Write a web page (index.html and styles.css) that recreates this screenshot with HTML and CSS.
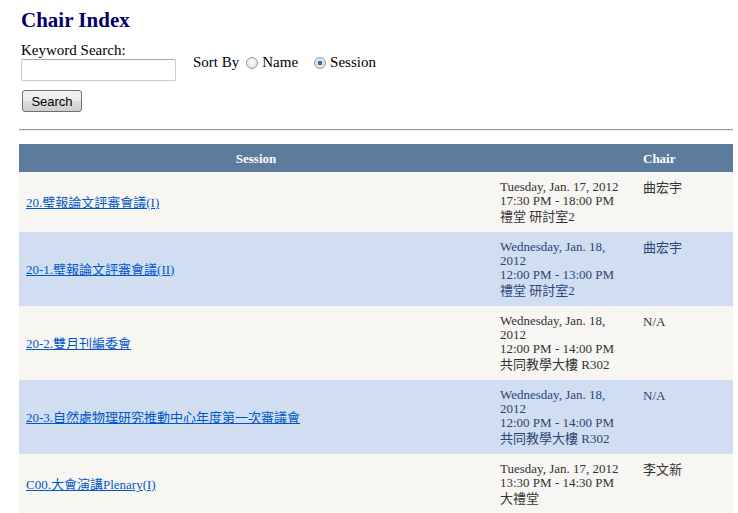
FILE: index.html
```html
<!DOCTYPE html>
<html lang="zh-Hant">
<head>
    <meta charset="UTF-8">
    <meta name="viewport" content="width=device-width, initial-scale=1.0">
    <link rel="stylesheet" href="styles.css">
    <title>Chair Index</title>
</head>
<body>
    <section id="page">

        <h1 class="title">Chair Index</h1>

        <form class="search" action="#" method="GET">
            <div class="keyword">
                <label for="keyword">Keyword Search:</label>
                <input class="inputs" type="text" id="keyword" name="keyword">
                <button type="submit" class="submits">Search</button>
            </div>
            <div class="sort">
                <span>Sort By</span>
                <input class="radios" type="radio" id="byName" name="sort" value="name">
                <label for="byName">Name</label>
                <input class="radios" type="radio" id="bySession" name="sort" value="session" checked>
                <label for="bySession">Session</label>
            </div>
        </form>

        <hr class="rule">

        <table class="grid">
            <colgroup>
                <col class="col-session">
                <col class="col-time">
                <col class="col-chair">
            </colgroup>
            <thead>
                <tr>
                    <th>Session</th>
                    <th></th>
                    <th class="left">Chair</th>
                </tr>
            </thead>
            <tbody>
                <tr class="row">
                    <td class="name"><a href="#">20.璧報論文評審會議(I)</a></td>
                    <td>Tuesday, Jan. 17, 2012<br>17:30 PM - 18:00 PM<span class="place">禮堂 研討室2</span></td>
                    <td class="chair">曲宏宇</td>
                </tr>
                <tr class="alt">
                    <td class="name"><a href="#">20-1.璧報論文評審會議(II)</a></td>
                    <td>Wednesday, Jan. 18, 2012<br>12:00 PM - 13:00 PM<span class="place">禮堂 研討室2</span></td>
                    <td class="chair">曲宏宇</td>
                </tr>
                <tr class="row">
                    <td class="name"><a href="#">20-2.雙月刊編委會</a></td>
                    <td>Wednesday, Jan. 18, 2012<br>12:00 PM - 14:00 PM<span class="place">共同教學大樓 R302</span></td>
                    <td class="chair">N/A</td>
                </tr>
                <tr class="alt">
                    <td class="name"><a href="#">20-3.自然處物理研究推動中心年度第一次審議會</a></td>
                    <td>Wednesday, Jan. 18, 2012<br>12:00 PM - 14:00 PM<span class="place">共同教學大樓 R302</span></td>
                    <td class="chair">N/A</td>
                </tr>
                <tr class="row">
                    <td class="name"><a href="#">C00.大會演講Plenary(I)</a></td>
                    <td>Tuesday, Jan. 17, 2012<br>13:30 PM - 14:30 PM<span class="place">大禮堂</span></td>
                    <td class="chair">李文新</td>
                </tr>
            </tbody>
        </table>

    </section>
</body>
</html>
```

FILE: styles.css
```css
* {
    box-sizing: border-box;
}

html, body {
    margin: 0;
    padding: 0;

    background-color: #FFFFFF;

    font-family: "Liberation Serif", "Noto Sans CJK TC", serif;
    color: #000000;
}

#page {
    padding: 8px 0 0 19px;
    width: 733px;
}

.title {
    margin: 0 0 10px 2px;

    font-size: 21px;
    font-weight: bold;
    line-height: 24px;
    color: #000066;
}

/*

    SEARCH FORM

*/

.search {
    display: flex;
    align-items: flex-start;
    gap: 17px;

    padding-left: 2px;

    font-size: 15px;
}

.keyword {
    display: flex;
    flex-direction: column;
    align-items: flex-start;
}

.keyword label {
    line-height: 17px;
}

.inputs {
    width: 155px;
    height: 22px;

    margin: 0 0 9px 0;
    padding: 1px 3px;

    border: 1px solid #C8CCD3;
    border-top-color: #A5A9B0;
    border-radius: 2px;

    font-size: 13px;
}

.submits {
    width: 60px;
    height: 22px;

    margin-left: 1px;
    padding: 0;

    border: 1px solid #707070;
    border-radius: 3px;

    background: linear-gradient(#F2F2F2 0%, #EBEBEB 50%, #DDDDDD 51%, #CFCFCF 100%);

    font-family: "Liberation Sans", sans-serif;
    font-size: 13px;
    color: #000000;
}

.sort {
    display: flex;
    align-items: center;

    margin-top: 12px;

    line-height: 17px;
}

.sort span {
    margin-right: 6px;
}

.radios {
    appearance: none;
    -webkit-appearance: none;

    width: 12px;
    height: 12px;

    margin: 0 4px 0 1px;

    border: 1px solid #9C9C9C;
    border-radius: 50%;

    background: radial-gradient(circle at 50% 40%, #FFFFFF 0%, #E6E6E6 60%, #D0D0D0 100%);
}

.radios:checked {
    background: radial-gradient(circle, #2F8FD0 0%, #1A5E9E 28%, #E8E8E8 36%, #D8D8D8 100%);
}

.sort label + .radios {
    margin-left: 16px;
}

/*

    RULE AND TABLE

*/

.rule {
    margin: 17px 0 13px 0;

    border: none;
    border-top: 1px solid #9A9A9A;
    border-bottom: 1px solid #EEEEEE;
}

.grid {
    width: 714px;

    border-collapse: collapse;
    table-layout: fixed;

    font-size: 13px;
    line-height: 14px;
}

.col-session {
    width: 474px;
}

.col-time {
    width: 143px;
}

.col-chair {
    width: 97px;
}

.grid th {
    height: 28px;
    padding: 2px 7px 0 7px;

    background-color: #5D7B9D;

    font-weight: bold;
    color: #FFFFFF;
    text-align: center;
}

.grid th.left {
    text-align: left;
}

.grid td {
    padding: 8px 7px 7px 7px;

    vertical-align: top;
}

.grid td.name {
    vertical-align: middle;

    line-height: 15px;
}

.grid td.chair {
    line-height: 17px;
    padding-top: 7px;
}

.place {
    display: block;

    line-height: 17px;
}

.grid a {
    color: #0058C8;
}

.row {
    background-color: #F7F6F3;
    color: #333333;
}

.alt {
    background-color: #D1DDF1;
    color: #284775;
}
```
